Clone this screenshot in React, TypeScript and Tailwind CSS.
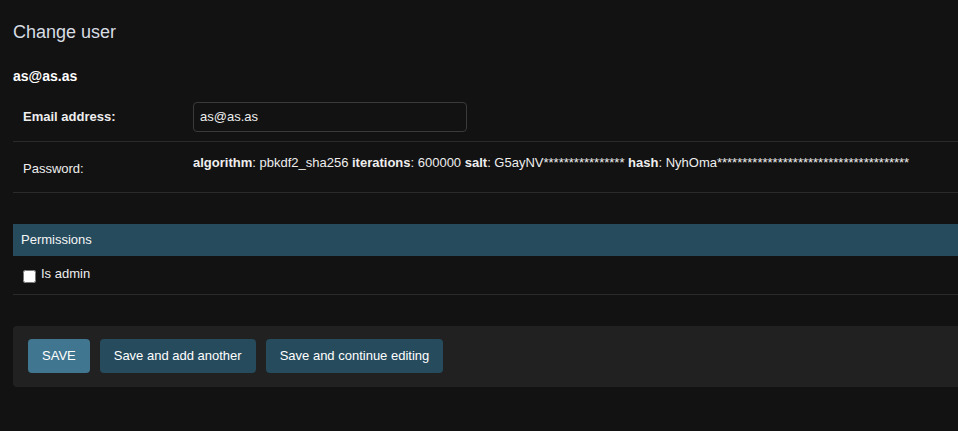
const saltMask = "*".repeat(16);
const hashMask = "*".repeat(38);

const buttons = [
    { name: "SAVE", cls: "bg-[#417690]" },
    { name: "Save and add another", cls: "bg-[#264b5d]" },
    { name: "Save and continue editing", cls: "bg-[#264b5d]" },
];

export default function App() {
    return (
        <div className="w-[958px] h-[431px] overflow-hidden bg-[#121212] text-[#eeeeee] font-['Liberation_Sans',sans-serif]">
            <div className="w-[1000px] pl-[13px] pt-[19px]">
                <h1 className="text-[18px] font-light leading-[26px] text-[#d7dde3]">Change user</h1>
                <h2 className="mt-[22px] text-[14px] font-bold leading-[18px] text-white">as@as.as</h2>

                <fieldset className="mt-[7px]">
                    <div className="flex items-center h-[50px] border-b border-[#2a2a2a] px-[10px]">
                        <label className="w-[170px] text-[13px] font-bold">Email address:</label>
                        <input
                            type="text"
                            defaultValue="as@as.as"
                            className="w-[274px] h-[30px] rounded-[4px] border border-[#3a3a3a] bg-[#121212] px-[6px] text-[13px] text-[#eeeeee] outline-none"
                        />
                    </div>
                    <div className="flex h-[51px] border-b border-[#2a2a2a] px-[10px]">
                        <label className="w-[170px] pt-[17px] text-[13px]">Password:</label>
                        <div className="pt-[11px] text-[13px] whitespace-nowrap">
                            <strong>algorithm</strong>: pbkdf2_sha256 <strong>iterations</strong>: 600000{" "}
                            <strong>salt</strong>: G5ayNV{saltMask} <strong>hash</strong>: NyhOma{hashMask}
                        </div>
                    </div>
                </fieldset>

                <fieldset className="mt-[31px]">
                    <h2 className="h-[32px] bg-[#264b5d] px-[8px] text-[13px] leading-[32px] text-[#f5f5f5]">Permissions</h2>
                    <div className="flex items-center gap-[5px] h-[39px] border-b border-[#2a2a2a] px-[10px]">
                        <input type="checkbox" className="w-[13px] h-[13px] mt-[3px] m-0" />
                        <label className="text-[13px] -mt-[2px]">Is admin</label>
                    </div>
                </fieldset>

                <div className="mt-[31px] flex gap-[10px] h-[61px] bg-[#212121] rounded-[4px] px-[15px] pt-[13px]">
                    {buttons.map((b) => (
                        <button
                            key={b.name}
                            className={`h-[34px] px-[14px] rounded-[4px] text-[13px] text-white ${b.cls}`}
                        >
                            {b.name}
                        </button>
                    ))}
                </div>
            </div>
        </div>
    );
}
